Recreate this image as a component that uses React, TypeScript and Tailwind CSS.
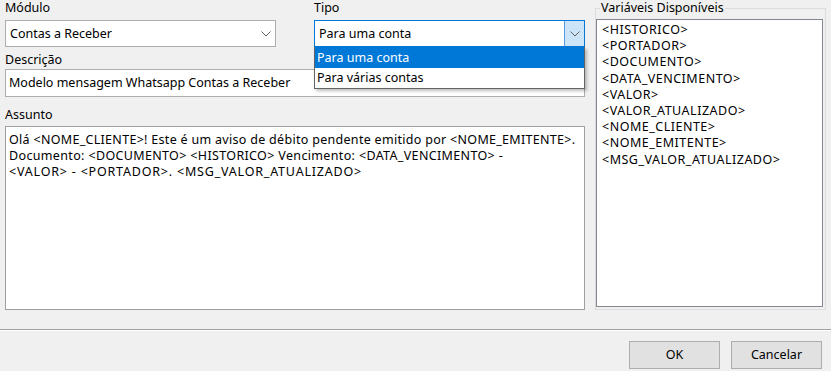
import React from 'react';

const font = { fontFamily: '"Noto Sans", "Open Sans", sans-serif' };

const Chevron: React.FC = () => (
  <svg width="10" height="6" viewBox="0 0 10 6" fill="none">
    <polyline points="0.5,0.5 5,5 9.5,0.5" stroke="#606060" strokeWidth="1" />
  </svg>
);

const variables = [
  '<HISTORICO>',
  '<PORTADOR>',
  '<DOCUMENTO>',
  '<DATA_VENCIMENTO>',
  '<VALOR>',
  '<VALOR_ATUALIZADO>',
  '<NOME_CLIENTE>',
  '<NOME_EMITENTE>',
  '<MSG_VALOR_ATUALIZADO>',
];

export default function App() {
  return (
    <div
      className="w-[831px] h-[371px] bg-[#f0f0f0] text-black text-[12.5px] flex flex-col overflow-hidden"
      style={font}
    >
      <div className="flex px-[5px] h-[310px]">
        {/* left column */}
        <div className="w-[580px] flex flex-col">
          <div className="flex justify-between">
            <div className="w-[271px] flex flex-col">
              <div className="h-[16px] leading-[16px]">Módulo</div>
              <div className="mt-[4px] h-[27px] bg-white border border-[#adadad] flex items-center justify-between pl-[4px] pr-[4px]">
                <span className="leading-[16px]">Contas a Receber</span>
                <Chevron />
              </div>
            </div>
            <div className="w-[271px] flex flex-col relative">
              <div className="h-[16px] leading-[16px]">Tipo</div>
              <div className="mt-[4px] h-[27px] bg-white border border-[#0078d7] flex items-stretch">
                <span className="flex-1 flex items-center pl-[4px] leading-[16px]">Para uma conta</span>
                <span className="w-[20px] bg-[#cce4f7] border-l border-[#569de5] flex items-center justify-center">
                  <Chevron />
                </span>
              </div>
              {/* open dropdown list */}
              <div className="absolute left-0 right-0 top-[47px] z-10 bg-white border border-[#646464] border-t-0 shadow-[2px_2px_3px_rgba(0,0,0,0.25)] flex flex-col">
                <div className="h-[21px] bg-[#0078d7] text-white flex items-center pl-[2px] leading-[16px]">Para uma conta</div>
                <div className="h-[20px] flex items-center pl-[2px] leading-[16px]">Para várias contas</div>
              </div>
            </div>
          </div>

          <div className="mt-[5px] h-[16px] leading-[16px]">Descrição</div>
          <div className="mt-[1px] h-[28px] bg-white border border-[#adadad] flex items-center pl-[3px] leading-[16px]">
            Modelo mensagem Whatsapp Contas a Receber
          </div>

          <div className="mt-[10px] h-[16px] leading-[16px]">Assunto</div>
          <div className="mt-[3px] flex-1 bg-white border border-[#a0a0a0] pl-[3px] pt-[5px] leading-[16px] whitespace-nowrap">
            <div className="tracking-[0.3px]">Olá &lt;NOME_CLIENTE&gt;! Este é um aviso de débito pendente emitido por &lt;NOME_EMITENTE&gt;.</div>
            <div className="tracking-[0.35px]">Documento: &lt;DOCUMENTO&gt; &lt;HISTORICO&gt; Vencimento: &lt;DATA_VENCIMENTO&gt; -</div>
            <div className="tracking-[0.8px]">&lt;VALOR&gt; - &lt;PORTADOR&gt;. &lt;MSG_VALOR_ATUALIZADO&gt;</div>
          </div>
        </div>

        {/* right group */}
        <fieldset className="ml-[10px] w-[231px] h-[310px] border border-[#dcdcdc] flex flex-col">
          <legend className="ml-[4px] px-[1px] leading-[16px]">Variáveis Disponíveis</legend>
          <div className="mt-[3px] mr-[2px] h-[288px] bg-white border border-[#828790] pl-[5px] pt-[2px] leading-[16.2px] tracking-[0.5px]">
            {variables.map(v => (
              <div key={v}>{v}</div>
            ))}
          </div>
        </fieldset>
      </div>

      {/* separator */}
      <div className="mt-[19px] border-t border-[#a0a0a0] border-b border-b-white" />

      {/* buttons */}
      <div className="mt-[10px] flex justify-end gap-[11px] pr-[9px]">
        <button className="w-[91px] h-[28px] bg-[#e1e1e1] border border-[#adadad] leading-[16px]">OK</button>
        <button className="w-[91px] h-[28px] bg-[#e1e1e1] border border-[#adadad] leading-[16px]">Cancelar</button>
      </div>
    </div>
  );
}
